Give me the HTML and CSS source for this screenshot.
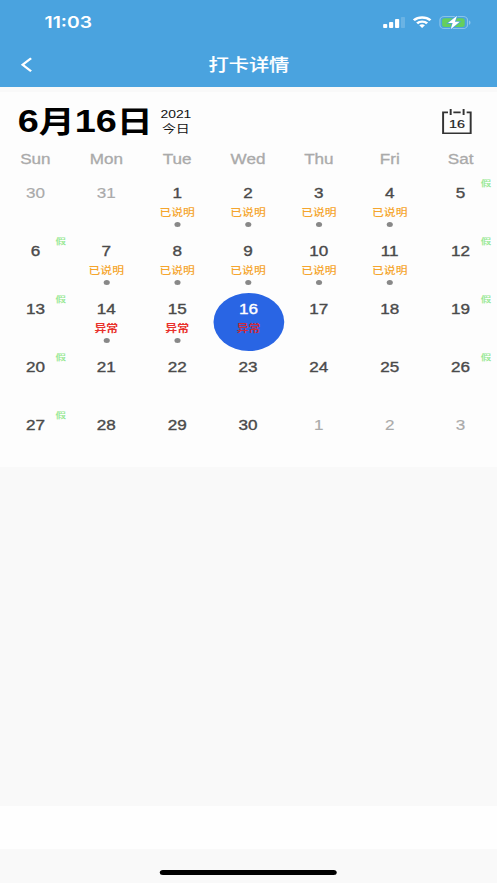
FILE: index.html
```
<!DOCTYPE html>
<html lang="zh-CN">
<head>
<meta charset="utf-8">
<title>打卡详情</title>
<link rel="stylesheet" href="styles.css">
</head>
<body>
<div class="screen">
  <header class="top">
    <div class="status">
      <span class="clock">11:03</span>
      <svg class="indicators" width="74" height="18" viewBox="0 0 74 18">
        <g fill="#fff">
          <rect x="0" y="11" width="3.4" height="4" rx="0.8"/>
          <rect x="4.9" y="9" width="3.4" height="6" rx="0.8"/>
          <rect x="9.8" y="6" width="3.4" height="9" rx="0.8"/>
          <rect x="14.6" y="4" width="3.4" height="11" rx="0.8" opacity=".18"/>
        </g>
        <g fill="none" stroke="#fff" stroke-width="2.3">
          <path d="M25.2 7.3a9.6 9.6 0 0 1 13.6 0"/>
          <path d="M27.9 10.4a5.8 5.8 0 0 1 8.2 0"/>
        </g>
        <path fill="#fff" d="M29.7 12.3a3.3 3.3 0 0 1 4.6 0l-2.3 2.7z"/>
        <rect x="46.6" y="3.5" width="22.6" height="12" rx="3.6" fill="none" stroke="#fff" stroke-opacity=".35"/>
        <path d="M70.6 7.5v4.2c1.3-.5 1.3-3.7 0-4.2z" fill="#fff" opacity=".45"/>
        <rect x="48.4" y="5.2" width="18.5" height="8.7" rx="2.2" fill="#65cf5d"/>
        <path d="M60.6 2.8l-7.4 7.3h3.8l-1.6 6.2 7.4-7.5h-3.9z" fill="#fff" stroke="#4aa3df" stroke-width="1.2" paint-order="stroke"/>
      </svg>
    </div>
    <nav class="nav">
      <svg class="back" width="10" height="16" viewBox="0 0 10 16"><path d="M8.5 1.3L1.5 7.8 8.5 14.3" fill="none" stroke="#fff" stroke-width="2"/></svg>
      <h1 class="title">打卡详情</h1>
    </nav>
  </header>
  <main class="calendar">
    <div class="summary">
      <span class="date">6<span class="unit">月</span>16<span class="unit">日</span></span>
      <div class="sub"><span>2021</span><span>今日</span></div>
      <div class="today">
        <svg width="25" height="28" viewBox="0 0 25 28"><path d="M5.2 4.4H1.2V25.2h22.6V4.4H20.5M9.6 4.4h6M7.4 1v6M18 1v6" fill="none" stroke="#333" stroke-width="1.6"/></svg>
        <span class="today-num">16</span>
      </div>
    </div>
    <div class="week"><span>Sun</span><span>Mon</span><span>Tue</span><span>Wed</span><span>Thu</span><span>Fri</span><span>Sat</span></div>
    <div class="days">
      <div class="day out"><b>30</b></div>
      <div class="day out"><b>31</b></div>
      <div class="day"><b>1</b><em>已说明</em><i></i></div>
      <div class="day"><b>2</b><em>已说明</em><i></i></div>
      <div class="day"><b>3</b><em>已说明</em><i></i></div>
      <div class="day"><b>4</b><em>已说明</em><i></i></div>
      <div class="day"><b>5</b><small>假</small></div>
      <div class="day"><b>6</b><small>假</small></div>
      <div class="day"><b>7</b><em>已说明</em><i></i></div>
      <div class="day"><b>8</b><em>已说明</em><i></i></div>
      <div class="day"><b>9</b><em>已说明</em><i></i></div>
      <div class="day"><b>10</b><em>已说明</em><i></i></div>
      <div class="day"><b>11</b><em>已说明</em><i></i></div>
      <div class="day"><b>12</b><small>假</small></div>
      <div class="day"><b>13</b><small>假</small></div>
      <div class="day bad"><b>14</b><em>异常</em><i></i></div>
      <div class="day bad"><b>15</b><em>异常</em><i></i></div>
      <div class="day bad selected"><b>16</b><em>异常</em></div>
      <div class="day"><b>17</b></div>
      <div class="day"><b>18</b></div>
      <div class="day"><b>19</b><small>假</small></div>
      <div class="day"><b>20</b><small>假</small></div>
      <div class="day"><b>21</b></div>
      <div class="day"><b>22</b></div>
      <div class="day"><b>23</b></div>
      <div class="day"><b>24</b></div>
      <div class="day"><b>25</b></div>
      <div class="day"><b>26</b><small>假</small></div>
      <div class="day"><b>27</b><small>假</small></div>
      <div class="day"><b>28</b></div>
      <div class="day"><b>29</b></div>
      <div class="day"><b>30</b></div>
      <div class="day out"><b>1</b></div>
      <div class="day out"><b>2</b></div>
      <div class="day out"><b>3</b></div>
    </div>
  </main>
  <div class="content"></div>
  <div class="bar"></div>
  <footer class="home"><div class="home-line"></div></footer>
</div>
</body>
</html>
```
FILE: styles.css
```
* { box-sizing: border-box; }
html, body { margin: 0; height: 883px; overflow: hidden; background: #f9f9f9; }
/* The layout is 408px wide and widened 1.22x to fill the window. */
.screen {
  width: 408px;
  height: 883px;
  transform: scaleX(1.22);
  transform-origin: 0 0;
  display: flex;
  flex-direction: column;
  background: #f9f9f9;
  font-family: "Liberation Sans", "Noto Sans CJK SC", sans-serif;
}
.top { height: 87px; background: #4aa3df; color: #fff; flex: none; }
.status { height: 43px; padding: 13px 20px 0 36.5px; display: flex; justify-content: space-between; }
.clock { font: 600 15.8px/20px Inter, sans-serif; }
.nav { height: 44px; display: flex; align-items: center; padding: 0 17px; }
.back { flex: none; }
.title { flex: 1; margin: 2px 10px 0 0; text-align: center; font-size: 16.6px; line-height: 24px; font-weight: 500; -webkit-text-stroke: .1px; }
.calendar { height: 375px; margin-top: 5px; background: #fdfdfd; flex: none; }
.summary { height: 55px; padding: 0 21px 0 14.5px; display: flex; align-items: center; }
.date { width: 110px; font-size: 31px; line-height: 40px; font-weight: 700; color: #000; margin-top: 4px; white-space: nowrap; }
.unit { font-size: 29.5px; }
.sub { margin: 4px 0 0 7px; display: flex; flex-direction: column; align-items: center; font-size: 11.4px; line-height: 14.5px; color: #111; }
.today { position: relative; margin: 4px 0 0 auto; width: 25px; height: 28px; }
.today-num { position: absolute; left: 0; right: 0; top: 9px; text-align: center; font-size: 11.8px; line-height: 14px; color: #222; -webkit-text-stroke: .2px; }
.week, .days { display: grid; width: 406.6px; grid-template-columns: repeat(7, 1fr); }
.week { height: 30px; text-align: center; font-size: 14px; line-height: 24px; color: #aaa; -webkit-text-stroke: .3px; }
.days { grid-auto-rows: 58px; }
.day { position: relative; display: flex; flex-direction: column; align-items: center; padding-top: 8px; color: #4a4a4a; }
.day b { font-size: 14px; line-height: 16px; font-weight: 400; -webkit-text-stroke: .35px; }
.day em { margin-top: 5px; font-size: 9.7px; line-height: 14px; font-style: normal; font-weight: 500; color: #f5a52d; }
.day i { margin-top: 2px; width: 5px; height: 5px; border-radius: 50%; background: #888; }
.day small { position: absolute; right: 4px; top: 0; font-size: 8.5px; line-height: 13px; color: #90e88c; -webkit-text-stroke: .15px; }
.day.out { color: #aaa; }
.day.out b { -webkit-text-stroke: .15px; }
.day.bad em { color: #e9312c; font-weight: 700; }
.selected { left: .4px; border-radius: 50%; background: #2965e4; }
.day.selected b { color: #fff; }
.day.selected em { color: #c92c3e; }
.content { height: 339px; background: #f9f9f9; }
.bar { height: 43px; background: #fefefe; }
.home { height: 34px; padding-top: 20.5px; background: #f9f9f9; }
.home-line { width: 145px; height: 5px; margin: 0 0 0 131px; border-radius: 3px; background: #000; }
```
